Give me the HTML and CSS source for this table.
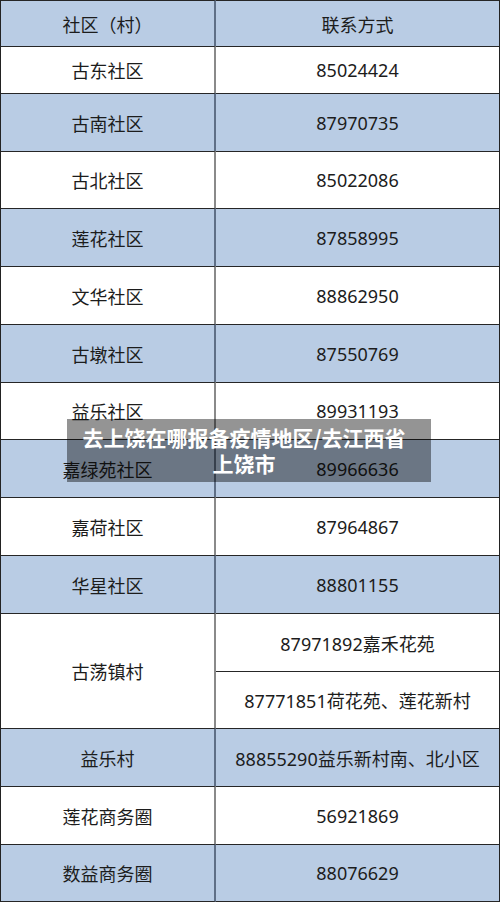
FILE: index.html
```html
<!DOCTYPE html>
<html lang="zh-CN">
<head>
<meta charset="utf-8">
<title>上饶社区联系方式</title>
<link rel="stylesheet" href="styles.css">
</head>
<body>
<div class="page">
  <div class="sheet">
    <div class="c l blue">社区（村）</div><div class="c r blue">联系方式</div>
    <div class="c l">古东社区</div><div class="c r">85024424</div>
    <div class="c l blue">古南社区</div><div class="c r blue">87970735</div>
    <div class="c l">古北社区</div><div class="c r">85022086</div>
    <div class="c l blue">莲花社区</div><div class="c r blue">87858995</div>
    <div class="c l">文华社区</div><div class="c r">88862950</div>
    <div class="c l blue">古墩社区</div><div class="c r blue">87550769</div>
    <div class="c l">益乐社区</div><div class="c r">89931193</div>
    <div class="c l blue">嘉绿苑社区</div><div class="c r blue">89966636</div>
    <div class="c l">嘉荷社区</div><div class="c r">87964867</div>
    <div class="c l blue">华星社区</div><div class="c r blue">88801155</div>
    <div class="c l span2">古荡镇村</div><div class="c r">87971892嘉禾花苑</div>
    <div class="c r">87771851荷花苑、莲花新村</div>
    <div class="c l blue">益乐村</div><div class="c r blue">88855290益乐新村南、北小区</div>
    <div class="c l">莲花商务圈</div><div class="c r">56921869</div>
    <div class="c l blue last">数益商务圈</div><div class="c r blue last">88076629</div>
  </div>
  <div class="caption">去上饶在哪报备疫情地区/去江西省<br>上饶市</div>
</div>
</body>
</html>
```

FILE: styles.css
```css
html, body {
  margin: 0;
  padding: 0;
  background: #ffffff;
}

.page {
  position: relative;
  width: 500px;
  height: 902px;
  overflow: hidden;
}

.sheet {
  box-sizing: border-box;
  width: 500px;
  height: 902px;
  border-left: 1px solid #222;
  border-right: 1px solid #222;
  display: grid;
  grid-template-columns: 215px 1fr;
  grid-template-rows: 46px 47px 58px 57px 58px 58px 58px 57px 58px 58px 58px 58px 57px 58px 58px 58px;
  font-family: "Noto Sans", "Noto Sans CJK SC", sans-serif;
  font-size: 18px;
  color: #1c1c1c;
}

.c {
  box-sizing: border-box;
  border-top: 1px solid #262626;
  display: flex;
  align-items: center;
  justify-content: center;
  background: #ffffff;
  white-space: nowrap;
}

.l {
  border-right: 2px solid #8a8a8a;
}

.blue {
  background: #b9cce4;
}

.blue.l {
  border-right-color: #5f6f86;
}

.span2 {
  grid-row: span 2;
}

.last {
  border-bottom: 1px solid #262626;
}

.caption {
  position: absolute;
  left: 67px;
  top: 419px;
  width: 334px;
  padding: 5px 20px 6px 10px;
  background: rgba(0, 0, 0, 0.42);
  color: #ffffff;
  font-family: "Noto Sans CJK SC", sans-serif;
  font-weight: 700;
  font-size: 21px;
  line-height: 26px;
  text-align: center;
  white-space: nowrap;
}
```
